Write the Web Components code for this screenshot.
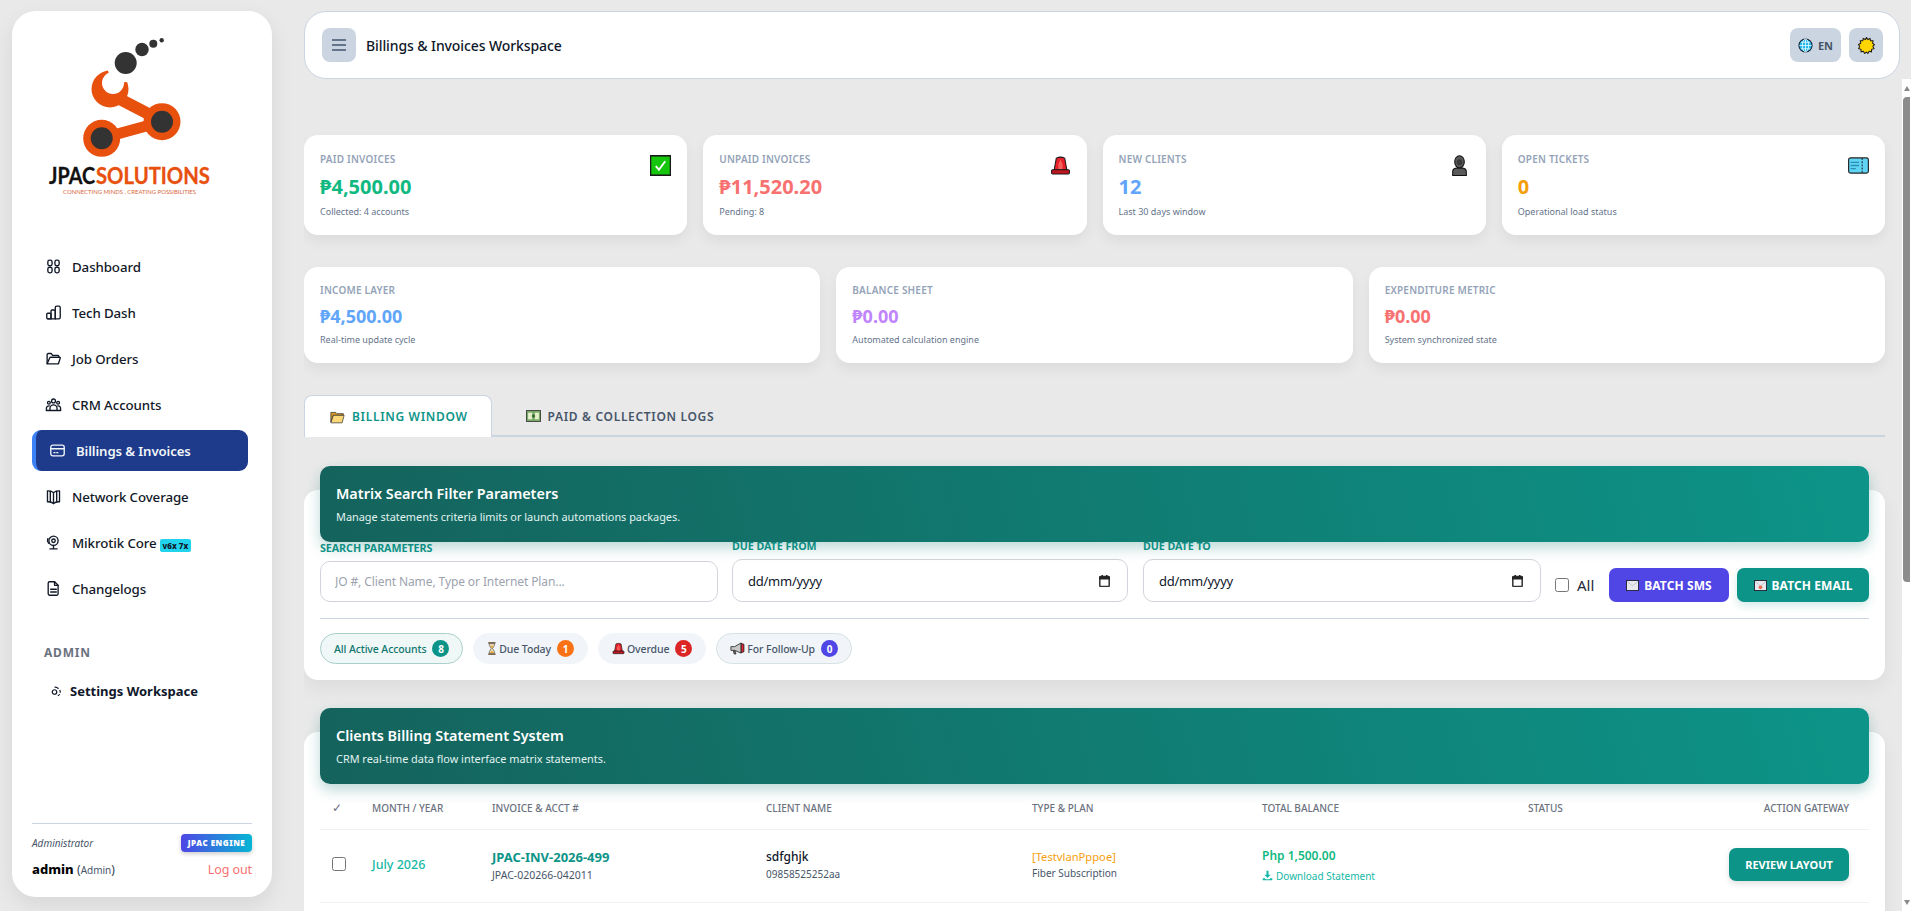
<!DOCTYPE html>
<html lang="en">
<head>
<meta charset="utf-8">
<title>Billings & Invoices Workspace</title>
<style>
    html, body { margin: 0; height: 100%; overflow: hidden; }
    body { background: #e9e9e9; font-family: "Noto Sans", "Open Sans", sans-serif; color: #0f172a; }
</style>
</head>
<body>
<app-shell>
    <side-bar slot="side"></side-bar>
    <top-bar slot="top"></top-bar>
    <stat-card label="Paid invoices" value="₱4,500.00" note="Collected: 4 accounts" color="#10b981" icon="check"></stat-card>
    <stat-card label="Unpaid invoices" value="₱11,520.20" note="Pending: 8" color="#f87171" icon="siren"></stat-card>
    <stat-card label="New clients" value="12" note="Last 30 days window" color="#60a5fa" icon="person"></stat-card>
    <stat-card label="Open tickets" value="0" note="Operational load status" color="#f59e0b" icon="ticket"></stat-card>
    <stat-card slot="wide" small label="Income layer" value="₱4,500.00" note="Real-time update cycle" color="#60a5fa"></stat-card>
    <stat-card slot="wide" small label="Balance sheet" value="₱0.00" note="Automated calculation engine" color="#c084fc"></stat-card>
    <stat-card slot="wide" small label="Expenditure metric" value="₱0.00" note="System synchronized state" color="#f87171"></stat-card>
    <tab-bar slot="tabs"></tab-bar>
    <filter-panel slot="filter"></filter-panel>
    <statement-panel slot="statement"></statement-panel>
</app-shell>

<script>
const EMOJI = {
    check: `<svg viewBox="0 0 20 20"><rect x="0" y="0" width="20" height="20" fill="#1a1a1a"/><rect x="1.200" y="1.500" width="17.600" height="17" fill="#16c60c"/><path d="M5.500 10.500l3 3.500 6-8" fill="none" stroke="#fff" stroke-width="1.800"/></svg>`,
    siren: `<svg viewBox="0 0 20 20"><path d="M6 3q4-2 8 0l2 11H4z" fill="#e8202a" stroke="#1a1a1a"/><path d="M10 4l2 5v4.500H8V9z" fill="#f4605a"/><rect x="1.500" y="14" width="17" height="4" rx="1" fill="#c2161f" stroke="#1a1a1a"/></svg>`,
    person: `<svg viewBox="0 0 20 20"><ellipse cx="10" cy="6.500" rx="4.600" ry="5.800" fill="#5a5a5a" stroke="#111"/><ellipse cx="10" cy="7" rx="2.700" ry="3" fill="#3a3a3a"/><path d="M3.500 19.500v-3.500q0-3 3.500-3.500h6q3.500.5 3.500 3.500v3.500z" fill="#5a5a5a" stroke="#111"/></svg>`,
    ticket: `<svg viewBox="0 0 20 16"><rect x=".6" y=".8" width="18.800" height="14.400" rx="1.800" fill="#5fd4f5" stroke="#222" stroke-width="1.100"/><path d="M13.500 1v14" stroke="#222" stroke-dasharray="1.800 1.200"/><path d="M2.500 5h8M2.500 8h8M2.500 11h5" stroke="#2b8fb5" stroke-width="1.200"/></svg>`,
    globe: `<svg viewBox="0 0 16 16"><circle cx="8" cy="8" r="7" fill="#22b8ee" stroke="#102030" stroke-width="1.100"/><path d="M1.500 8h13M8 1.500v13M3 4.500h10M3 11.500h10" stroke="#e6f8ff" stroke-width=".9" fill="none"/><ellipse cx="8" cy="8" rx="3.400" ry="6.800" fill="none" stroke="#e6f8ff" stroke-width=".9"/></svg>`,
    sun: `<svg viewBox="0 0 20 20"><path d="M10 .6l1.600 2.400 2.600-1.300.6 2.800 2.900-.1-.5 2.900L19.400 9l-1.900 2.100 1.300 2.600-2.800.8-.1 2.900-2.800-.6-1.400 2.500L10 17.700l-2.200 1.600-1.400-2.500-2.800.6-.1-2.900-2.800-.8 1.300-2.600L.6 9l2.600-1.700-.5-2.900 2.900.1.600-2.800 2.600 1.300z" fill="#ffd500" stroke="#1a1a1a" stroke-width="1.200"/></svg>`,
    folder: `<svg viewBox="0 0 18 16"><path d="M1 2.500h6l1.500 1.500H16v2H4L1 14z" fill="#d99a2b" stroke="#222" stroke-width=".8"/><path d="M4 6h13l-2.500 9H1z" fill="#fcd778" stroke="#222" stroke-width=".8"/></svg>`,
    money: `<svg viewBox="0 0 18 14"><rect x=".5" y=".5" width="17" height="13" fill="#77a865" stroke="#333"/><rect x="2.500" y="3" width="5" height="8" fill="#e3efc8"/><rect x="10.500" y="3" width="5" height="8" fill="#e3efc8"/><circle cx="9" cy="7" r="2" fill="#3c6b34"/></svg>`,
    mail: `<svg viewBox="0 0 14 12"><rect x=".5" y=".5" width="13" height="11" fill="#e8e8ee" stroke="#223"/><path d="M1 1.500l6 5 6-5" fill="none" stroke="#b7b7c4" stroke-width=".8"/></svg>`,
    mailred: `<svg viewBox="0 0 14 12"><rect x=".5" y=".5" width="13" height="11" fill="#e8e8ee" stroke="#223"/><path d="M1 1.500l6 5 6-5" fill="none" stroke="#b7b7c4" stroke-width=".8"/><circle cx="7" cy="8" r="2" fill="#e8684a"/></svg>`,
    hourglass: `<svg viewBox="0 0 12 16"><path d="M1.500 1h9M1.500 15h9" stroke="#5a3a1a" stroke-width="1.600"/><path d="M2.800 2h6.400v2L6.800 8l2.400 4v2H2.800v-2l2.400-4-2.400-4z" fill="#f3e3b8" stroke="#444" stroke-width=".8"/><path d="M4 4.500h4L6 8zM3.500 13.500L6 10.500l2.500 3z" fill="#e8a33a"/></svg>`,
    megaphone: `<svg viewBox="0 0 16 14"><path d="M1 5h4l7-4v11L5 9H1z" fill="#c9c9c9" stroke="#222" stroke-width=".9"/><path d="M12 1.500l3 1v8l-3 1z" fill="#e0242c" stroke="#222" stroke-width=".9"/><path d="M3.500 9.500l1 3.500h2l-1-3.500z" fill="#666" stroke="#222" stroke-width=".7"/></svg>`
};

const NAV_ICONS = {
    dashboard: `<rect x="4" y="3" width="6" height="8" rx="2.500"/><rect x="14" y="3" width="6" height="8" rx="2.500"/><rect x="4" y="13" width="6" height="8" rx="2.500"/><rect x="14" y="13" width="6" height="8" rx="2.500"/>`,
    chart: `<rect x="2.500" y="13" width="6" height="8" rx="1.500"/><path d="M8.500 21V10a1.500 1.500 0 0 1 1.500-1.500h3a1.500 1.500 0 0 1 1.500 1.500v11"/><path d="M14.500 21V5a2 2 0 0 1 2-2h3a2 2 0 0 1 2 2v14a2 2 0 0 1-2 2H4"/>`,
    folder: `<path d="M3 19V6.500A1.500 1.500 0 0 1 4.500 5h4.200l2 2.500h7.300A1.500 1.500 0 0 1 19.500 9v1"/><path d="M3 19.500h16l2.500-8a1 1 0 0 0-1-1.300H8a1.500 1.500 0 0 0-1.400 1L3 19.500z"/>`,
    users: `<circle cx="12" cy="7" r="2.700"/><circle cx="5.500" cy="9.500" r="2"/><circle cx="18.500" cy="9.500" r="2"/><path d="M7 20v-2.500a5 5 0 0 1 10 0V20"/><path d="M2 20v-2.500A3.500 3.500 0 0 1 6 14"/><path d="M22 20v-2.500A3.500 3.500 0 0 0 18 14"/><path d="M2 20.500h20"/>`,
    card: `<rect x="2.500" y="4.500" width="19" height="15" rx="3"/><path d="M2.500 9.500h19M7 15h1.500M11 15h1.500"/>`,
    map: `<path d="M12 6.500C10 4.500 7 3.800 3.500 4v15.500c3.500-.2 6.500.5 8.500 2.500 2-2 5-2.700 8.500-2.500V4C17 3.800 14 4.500 12 6.500z"/><path d="M12 6.500V22M7.500 4.500v15M16.500 4.500v15"/>`,
    webcam: `<circle cx="12" cy="9.500" r="6.500"/><circle cx="12" cy="9.500" r="2.500"/><path d="M12 16v5M7 21h10M4 6.500C3.300 8 3.500 11 5 13"/>`,
    file: `<path d="M6.500 2.500h7l5 5v12a2 2 0 0 1-2 2h-10a2 2 0 0 1-2-2v-15a2 2 0 0 1 2-2z"/><path d="M13.500 2.500v5h5M8 13h8M8 17h8"/>`,
    gear: `<circle cx="9" cy="14" r="4.500"/><path d="M9 4.500a9.500 9.500 0 0 1 8 3M19.500 10a9.500 9.500 0 0 1 1 5.500M19.500 18.500a9 9 0 0 1-4 3"/>`
};

class AppShell extends HTMLElement {
    constructor() {
        super();
        this.attachShadow({ mode: 'open' });
        this.shadowRoot.innerHTML = `
            <style>
                :host { display: flex; height: 911px; overflow: hidden; }
                .side { flex: 0 0 260px; padding: 11px 0 14px 12px; display: flex; }
                .main { flex: 1; min-width: 0; display: flex; flex-direction: column; padding-left: 32px; }
                .top { padding: 11px 11px 0 0; }
                .body { flex: 1; min-height: 0; display: flex; }
                .content { flex: 1; min-width: 0; overflow: hidden; padding: 56px 17px 0 0; }
                .grid4 { display: grid; grid-template-columns: repeat(4, 1fr); gap: 16px; }
                .grid3 { display: grid; grid-template-columns: repeat(3, 1fr); gap: 16px; margin-top: 32px; }
                .tabs { margin-top: 32px; }
                .filter { margin-top: 53px; }
                .statement { margin-top: 52px; }
            </style>
            <div class="side"><slot name="side"></slot></div>
            <div class="main">
                <div class="top"><slot name="top"></slot></div>
                <div class="body">
                    <div class="content">
                        <div class="grid4"><slot></slot></div>
                        <div class="grid3"><slot name="wide"></slot></div>
                        <div class="tabs"><slot name="tabs"></slot></div>
                        <div class="filter"><slot name="filter"></slot></div>
                        <div class="statement"><slot name="statement"></slot></div>
                    </div>
                    <scroll-track></scroll-track>
                </div>
            </div>
        `;
    }
}

class ScrollTrack extends HTMLElement {
    constructor() {
        super();
        this.attachShadow({ mode: 'open' });
        this.shadowRoot.innerHTML = `
            <style>
                :host { flex: 0 0 9px; display: flex; flex-direction: column; background: #fff; padding: 0 1px; box-sizing: border-box; }
                .up, .down { height: 18px; display: flex; align-items: center; justify-content: center; }
                .up::before { content: ""; border: 3.5px solid transparent; border-top: 0; border-bottom: 5px solid #8a8a8a; }
                .down::before { content: ""; border: 3.5px solid transparent; border-bottom: 0; border-top: 5px solid #8a8a8a; }
                .thumb { height: 485px; background: #8c8c8c; border-radius: 4px 0 0 4px; }
                .rest { flex: 1; }
            </style>
            <div class="up"></div>
            <div class="thumb"></div>
            <div class="rest"></div>
            <div class="down"></div>
        `;
    }
}

class NavItem extends HTMLElement {
    constructor() {
        super();
        this.attachShadow({ mode: 'open' });
        const icon = NAV_ICONS[this.getAttribute('icon')] || '';
        this.shadowRoot.innerHTML = `
            <style>
                :host { display: flex; align-items: center; height: 41px; gap: 10px; padding: 0 13px; font-size: 13.3px; letter-spacing: -.1px; font-weight: 500; color: #111827; box-sizing: border-box; }
                :host([active]) { background: #1e3a8a; color: #f1f5f9; font-size: 13.2px; font-weight: 600; border-left: 4px solid #3b82f6; border-radius: 9px; }
                svg { width: 17px; height: 17px; flex: none; fill: none; stroke: currentColor; stroke-width: 1.9; stroke-linecap: round; stroke-linejoin: round; }
            </style>
            <svg viewBox="0 0 24 24">${icon}</svg>
            <span><slot></slot></span>
        `;
    }
}

class SideBar extends HTMLElement {
    constructor() {
        super();
        this.attachShadow({ mode: 'open' });
        this.shadowRoot.innerHTML = `
            <style>
                :host { display: flex; flex-direction: column; width: 260px; height: 886px; background: #fff; border-radius: 24px; box-shadow: 0 8px 22px rgba(0,0,0,.08); padding: 0 20px 18px; box-sizing: border-box; }
                .logo { height: 235px; margin: 0 -20px; flex: none; }
                .logo svg { display: block; }
                nav { display: flex; flex-direction: column; gap: 5px; margin-right: 4px; }
                .tag { background: #22d3ee; color: #0f172a; font-size: 8px; font-weight: 800; letter-spacing: 0; padding: 1px 3px; border-radius: 2px; margin-left: 3px; position: relative; top: 1px; }
                .admin { margin: 35px 0 0 12px; font-size: 12px; font-weight: 700; letter-spacing: .8px; color: #6b7280; }
                .settings { display: flex; align-items: center; gap: 8px; margin: 21px 0 0 18px; font-size: 13px; font-weight: 700; color: #0f172a; }
                .settings svg { width: 12px; height: 12px; fill: none; stroke: currentColor; stroke-width: 2.400; }
                .foot { margin-top: auto; border-top: 1px solid #cbd5e1; padding-top: 10px; display: grid; grid-template-columns: 1fr auto; row-gap: 8px; align-items: center; }
                .role { font-size: 10px; font-style: italic; color: #475569; }
                .engine { width: 71px; height: 18px; line-height: 18px; text-align: center; background: linear-gradient(90deg, #4f46e5, #06b6d4); color: #fff; font-size: 8px; font-weight: 900; letter-spacing: .5px; border-radius: 4px; box-shadow: 0 2px 4px rgba(0,0,0,.2); }
                .who { font-size: 13px; line-height: 18px; font-weight: 800; color: #000; }
                .who small { font-size: 10px; font-weight: 400; color: #475569; }
                .who i { font-size: 12px; font-weight: 400; font-style: normal; color: #334155; }
                .out { font-size: 12.5px; letter-spacing: -.1px; color: #f87171; justify-self: end; }
            </style>
            <div class="logo">
                <svg width="260" height="235" viewBox="0 0 260 235">
                    <g transform="translate(-12 -11)">
                        <path d="M101.700 138.300L162 121.700" stroke="#e8500e" stroke-width="11"/>
                        <path d="M112 95L162 121" stroke="#e8500e" stroke-width="12"/>
                        <circle cx="110" cy="89" r="18.500" fill="#e8500e"/>
                        <circle cx="113" cy="83" r="11" fill="#fff"/>
                        <path d="M113 83L108 71L112 58L134 66L127.500 82z" fill="#fff"/>
                        <circle cx="162" cy="121.700" r="18.500" fill="#e8500e"/>
                        <circle cx="162" cy="121.700" r="11" fill="#333"/>
                        <circle cx="101.700" cy="138.300" r="18.500" fill="#e8500e"/>
                        <circle cx="101.700" cy="138.300" r="11" fill="#333"/>
                        <circle cx="125.700" cy="63" r="11" fill="#333"/>
                        <circle cx="142" cy="49.500" r="6.700" fill="#333"/>
                        <circle cx="153.300" cy="43.700" r="4" fill="#333"/>
                        <circle cx="161.700" cy="40.300" r="2.200" fill="#333"/>
                        <text x="49" y="183.600" font-family="Lato, sans-serif" font-size="22" font-weight="700" fill="#111" stroke="#111" stroke-width=".3" textLength="46" lengthAdjust="spacingAndGlyphs">JPAC</text>
                        <text x="96" y="183.600" font-family="Lato, sans-serif" font-size="22" font-weight="700" fill="#e8500e" stroke="#e8500e" stroke-width=".3" textLength="114" lengthAdjust="spacingAndGlyphs">SOLUTIONS</text>
                        <text x="63" y="194" font-family="Lato, sans-serif" font-size="5.500" fill="#d9673a" textLength="133" lengthAdjust="spacingAndGlyphs">CONNECTING MINDS , CREATING POSSIBILITIES</text>
                    </g>
                </svg>
            </div>
            <nav>
                <nav-item icon="dashboard">Dashboard</nav-item>
                <nav-item icon="chart">Tech Dash</nav-item>
                <nav-item icon="folder">Job Orders</nav-item>
                <nav-item icon="users">CRM Accounts</nav-item>
                <nav-item icon="card" active>Billings &amp; Invoices</nav-item>
                <nav-item icon="map">Network Coverage</nav-item>
                <nav-item icon="webcam">Mikrotik Core<span class="tag">v6x 7x</span></nav-item>
                <nav-item icon="file">Changelogs</nav-item>
            </nav>
            <div class="admin">ADMIN</div>
            <div class="settings"><svg viewBox="0 0 24 24">${NAV_ICONS.gear}</svg>Settings Workspace</div>
            <div class="foot">
                <span class="role">Administrator</span>
                <span class="engine">JPAC ENGINE</span>
                <span class="who">admin <i>(<small>Admin</small>)</i></span>
                <span class="out">Log out</span>
            </div>
        `;
    }
}

class TopBar extends HTMLElement {
    constructor() {
        super();
        this.attachShadow({ mode: 'open' });
        this.shadowRoot.innerHTML = `
            <style>
                :host { display: flex; align-items: center; height: 68px; box-sizing: border-box; background: #fff; border: 1px solid #cbd5e1; border-radius: 22px; padding: 0 16px 0 17px; }
                .menu { width: 34px; height: 34px; border-radius: 8px; background: #cbd5e1; display: flex; align-items: center; justify-content: center; }
                .menu svg { width: 16px; height: 16px; stroke: #64748b; stroke-width: 1.8; fill: none; }
                h1 { margin: 0 0 0 10px; font-size: 14px; letter-spacing: -.1px; font-weight: 500; color: #0f172a; flex: 1; }
                .btn { height: 34px; border-radius: 8px; background: #cbd5e1; display: flex; align-items: center; justify-content: center; gap: 5px; font-size: 11px; font-weight: 700; color: #475569; }
                .lang { width: 51px; margin-right: 8px; }
                .lang svg { width: 15px; height: 15px; }
                .theme { width: 34px; }
                .theme svg { width: 17px; height: 17px; }
            </style>
            <div class="menu"><svg viewBox="0 0 16 16"><path d="M1 3h14M1 8h14M1 13h14"/></svg></div>
            <h1>Billings &amp; Invoices Workspace</h1>
            <div class="btn lang">${EMOJI.globe}EN</div>
            <div class="btn theme">${EMOJI.sun}</div>
        `;
    }
}

class StatCard extends HTMLElement {
    constructor() {
        super();
        this.attachShadow({ mode: 'open' });
        const icon = EMOJI[this.getAttribute('icon')];
        this.shadowRoot.innerHTML = `
            <style>
                :host { display: block; position: relative; height: 100px; box-sizing: border-box; background: #fff; border-radius: 14px; padding: 16px; box-shadow: 0 6px 14px rgba(0,0,0,.06); }
                :host([small]) { height: 96px; padding-top: 15px; }
                .label { font-size: 10px; line-height: 16px; font-weight: 600; text-transform: uppercase; letter-spacing: .2px; color: #94a3b8; }
                .value { font-size: 20px; line-height: 28px; font-weight: 700; color: var(--c); margin-top: 6px; }
                :host([small]) .value { font-size: 18px; line-height: 26px; margin-top: 5px; }
                .note { font-size: 9px; line-height: 14px; color: #64748b; margin-top: 4px; }
                :host([small]) .note { margin-top: 4px; }
                svg { position: absolute; top: 20px; right: 16px; width: 21px; height: 21px; }
            </style>
            <div class="label">${this.getAttribute('label')}</div>
            <div class="value" style="--c:${this.getAttribute('color')}">${this.getAttribute('value')}</div>
            <div class="note">${this.getAttribute('note')}</div>
            ${icon || ''}
        `;
    }
}

class TabBar extends HTMLElement {
    constructor() {
        super();
        this.attachShadow({ mode: 'open' });
        this.shadowRoot.innerHTML = `
            <style>
                :host { display: flex; height: 42px; box-sizing: border-box; border-bottom: 2px solid #cbd5e1; }
                .tab { display: flex; align-items: center; gap: 7px; padding: 0 25px; height: 42px; box-sizing: border-box; font-size: 12px; font-weight: 600; letter-spacing: .67px; color: #475569; }
                .tab svg { width: 15px; height: 14px; }
                .on { background: #fff; color: #0d9488; border: 1px solid #cbd5e1; border-bottom: 0; border-radius: 8px 8px 0 0; margin-right: 9px; padding-right: 23px; }
            </style>
            <div class="tab on">${EMOJI.folder}BILLING WINDOW</div>
            <div class="tab">${EMOJI.money}PAID &amp; COLLECTION LOGS</div>
        `;
    }
}

class PanelHead extends HTMLElement {
    constructor() {
        super();
        this.attachShadow({ mode: 'open' });
        this.shadowRoot.innerHTML = `
            <style>
                :host { display: block; height: 76px; box-sizing: border-box; margin-top: -24px; padding: 17px 16px 0; border-radius: 10px; color: #fff; background: linear-gradient(75deg, #14635c, #0d9488); box-shadow: 0 6px 14px rgba(15,118,110,.28); position: relative; }
                .t { font-size: 14.4px; line-height: 22px; font-weight: 600; }
                .s { font-size: 10.9px; line-height: 16px; margin-top: 4px; color: #e2f3f1; }
            </style>
            <div class="t">${this.getAttribute('title')}</div>
            <div class="s">${this.getAttribute('sub')}</div>
        `;
    }
}

class FilterChip extends HTMLElement {
    constructor() {
        super();
        this.attachShadow({ mode: 'open' });
        const icon = EMOJI[this.getAttribute('icon')];
        this.shadowRoot.innerHTML = `
            <style>
                :host { display: inline-flex; align-items: center; height: 31px; box-sizing: border-box; padding: 0 13px; border-radius: 16px; background: #f1f5f9; border: 1px solid #f1f5f9; font-size: 10.5px; letter-spacing: -.1px; font-weight: 500; color: #475569; white-space: nowrap; }
                :host([active]) { background: #f0f7f7; border-color: #a9cfcb; color: #0f766e; }
                :host([line]) { border-color: #d5e3e3; }
                svg { height: 13px; width: auto; margin-right: 2px; }
                b { margin-left: 6px; width: 17px; height: 17px; border-radius: 50%; display: flex; align-items: center; justify-content: center; color: #fff; font-size: 10px; font-weight: 700; background: var(--b); }
            </style>
            ${icon || ''}<slot></slot><b style="--b:${this.getAttribute('badge')}">${this.getAttribute('count')}</b>
        `;
    }
}

class DateField extends HTMLElement {
    constructor() {
        super();
        this.attachShadow({ mode: 'open' });
        this.shadowRoot.innerHTML = `
            <style>
                :host { display: flex; align-items: center; justify-content: space-between; box-sizing: border-box; height: 43px; border: 1px solid #d1d5db; border-radius: 10px; padding: 0 17px 0 15px; background: #fff; font-size: 13px; letter-spacing: -.25px; color: #0f172a; }
                svg { width: 11px; height: 12px; }
            </style>
            <span>dd/mm/yyyy</span>
            <svg viewBox="0 0 11 12"><rect x=".8" y="1.500" width="9.400" height="10" rx=".8" fill="#fff" stroke="#333" stroke-width="1.500"/><rect x="0" y="1.500" width="11" height="3" fill="#222"/><rect x="2.500" y="0" width="1.500" height="2" fill="#222"/><rect x="7" y="0" width="1.500" height="2" fill="#222"/></svg>
        `;
    }
}

class FilterPanel extends HTMLElement {
    constructor() {
        super();
        this.attachShadow({ mode: 'open' });
        this.shadowRoot.innerHTML = `
            <style>
                :host { display: flow-root; height: 190px; box-sizing: border-box; background: #fff; border-radius: 14px; padding: 0 16px; box-shadow: 0 8px 20px rgba(0,0,0,.06); }
                .row { display: flex; align-items: flex-end; height: 60px; }
                .field { display: flex; flex-direction: column; }
                label { font-size: 10.7px; line-height: 12px; font-weight: 700; letter-spacing: -.05px; color: #0d9488; margin-bottom: 7px; }
                input[type=text] { box-sizing: border-box; width: 100%; height: 41px; border: 1px solid #d1d5db; border-radius: 10px; padding: 0 14px; font: 12px "Noto Sans", sans-serif; letter-spacing: -.1px; color: #0f172a; background: #fff; outline: 0; }
                input::placeholder { color: #9ca3af; }
                .all { display: flex; align-items: center; gap: 8px; width: 40px; font-size: 15px; color: #1e293b; height: 34px; margin-left: 14px; margin-right: 14px; }
                .all input { width: 14px; height: 14px; margin: 0; flex: none; }
                .btn { display: flex; align-items: center; justify-content: center; gap: 5px; height: 34px; border-radius: 7px; color: #fff; font-size: 12px; font-weight: 700; letter-spacing: .1px; }
                .btn svg { width: 13px; height: 11px; }
                .sms { width: 120px; background: #4f46e5; margin-right: 8px; }
                .email { width: 132px; background: #0d9488; box-shadow: 0 4px 8px rgba(13,148,136,.18); }
                hr { border: 0; border-top: 1px solid #cbd5e1; margin: 16px 0 14px; }
                .chips { display: flex; gap: 10px; }
            </style>
            <panel-head title="Matrix Search Filter Parameters" sub="Manage statements criteria limits or launch automations packages."></panel-head>
            <div class="row">
                <div class="field" style="width:398px;margin-right:14px"><label>SEARCH PARAMETERS</label><input type="text" placeholder="JO #, Client Name, Type or Internet Plan..."></div>
                <div class="field" style="width:396px;margin-right:15px"><label>DUE DATE FROM</label><date-field></date-field></div>
                <div class="field" style="width:398px"><label>DUE DATE TO</label><date-field></date-field></div>
                <div class="all"><input type="checkbox">All</div>
                <div class="btn sms">${EMOJI.mail}BATCH SMS</div>
                <div class="btn email">${EMOJI.mailred}BATCH EMAIL</div>
            </div>
            <hr>
            <div class="chips">
                <filter-chip active badge="#0d9488" count="8">All Active Accounts</filter-chip>
                <filter-chip icon="hourglass" badge="#f97316" count="1">Due Today</filter-chip>
                <filter-chip icon="siren" badge="#dc2626" count="5">Overdue</filter-chip>
                <filter-chip line icon="megaphone" badge="#4f46e5" count="0">For Follow-Up</filter-chip>
            </div>
        `;
    }
}

class StatementPanel extends HTMLElement {
    constructor() {
        super();
        this.attachShadow({ mode: 'open' });
        this.shadowRoot.innerHTML = `
            <style>
                :host { display: flow-root; background: #fff; border-radius: 14px 14px 0 0; padding: 0 16px 40px; box-shadow: 0 8px 20px rgba(0,0,0,.06); }
                table { width: 1549px; border-collapse: collapse; table-layout: fixed; }
                th { height: 45px; padding: 3px 12px 0; box-sizing: border-box; text-align: left; font-size: 10px; font-weight: 500; color: #6b7280; border-bottom: 1px solid #f1f1f4; white-space: nowrap; }
                th.tick { font-size: 12px; font-weight: 400; }
                td { height: 73px; padding: 0 12px 2px; font-size: 11px; border-bottom: 1px solid #f1f1f4; vertical-align: middle; box-sizing: border-box; }
                .r { text-align: right; padding-right: 20px; }
                .month { font-size: 12.5px; font-weight: 500; color: #14b8a6; }
                .inv { font-size: 13px; font-weight: 700; color: #0d9488; }
                .small { font-size: 10px; color: #475569; margin-top: 2px; }
                .acct { font-size: 10.5px; }
                .name { font-size: 12px; font-weight: 500; color: #0f172a; }
                .plan { font-size: 11.2px; color: #f59e0b; }
                .bal { font-size: 12px; font-weight: 600; color: #10b981; }
                .dl { display: flex; align-items: center; gap: 3px; font-size: 10px; color: #14b8a6; margin-top: 5px; }
                .dl svg { width: 11px; height: 11px; fill: #14b8a6; }
                .review { display: inline-flex; align-items: center; justify-content: center; width: 120px; height: 33px; border-radius: 7px; background: #0d9488; color: #fff; font-size: 11px; font-weight: 700; box-shadow: 0 3px 6px rgba(0,0,0,.12); }
                input { width: 14px; height: 14px; margin: -2px 0 0; display: block; }
            </style>
            <panel-head title="Clients Billing Statement System" sub="CRM real-time data flow interface matrix statements."></panel-head>
            <table>
                <colgroup><col style="width:40px"><col style="width:120px"><col style="width:274px"><col style="width:266px"><col style="width:230px"><col style="width:266px"><col><col style="width:160px"></colgroup>
                <tr><th class="tick">✓</th><th>MONTH / YEAR</th><th>INVOICE &amp; ACCT #</th><th>CLIENT NAME</th><th>TYPE &amp; PLAN</th><th>TOTAL BALANCE</th><th>STATUS</th><th class="r">ACTION GATEWAY</th></tr>
                <tr>
                    <td><input type="checkbox"></td>
                    <td class="month">July 2026</td>
                    <td><div class="inv">JPAC-INV-2026-499</div><div class="small acct">JPAC-020266-042011</div></td>
                    <td><div class="name">sdfghjk</div><div class="small">09858525252aa</div></td>
                    <td><div class="plan">[TestvlanPppoe]</div><div class="small">Fiber Subscription</div></td>
                    <td><div class="bal">Php 1,500.00</div><div class="dl"><svg viewBox="0 0 16 16"><path d="M6.500 1h3v6h3L8 11.500 3.500 7h3zM1 12h3l1.500 1.500h5L12 12h3v3H1z"/></svg>Download Statement</div></td>
                    <td></td>
                    <td class="r"><span class="review">REVIEW LAYOUT</span></td>
                </tr>
            </table>
        `;
    }
}

customElements.define('panel-head', PanelHead);
customElements.define('filter-chip', FilterChip);
customElements.define('date-field', DateField);
customElements.define('nav-item', NavItem);
customElements.define('scroll-track', ScrollTrack);
customElements.define('side-bar', SideBar);
customElements.define('top-bar', TopBar);
customElements.define('stat-card', StatCard);
customElements.define('tab-bar', TabBar);
customElements.define('filter-panel', FilterPanel);
customElements.define('statement-panel', StatementPanel);
customElements.define('app-shell', AppShell);
</script>
</body>
</html>
